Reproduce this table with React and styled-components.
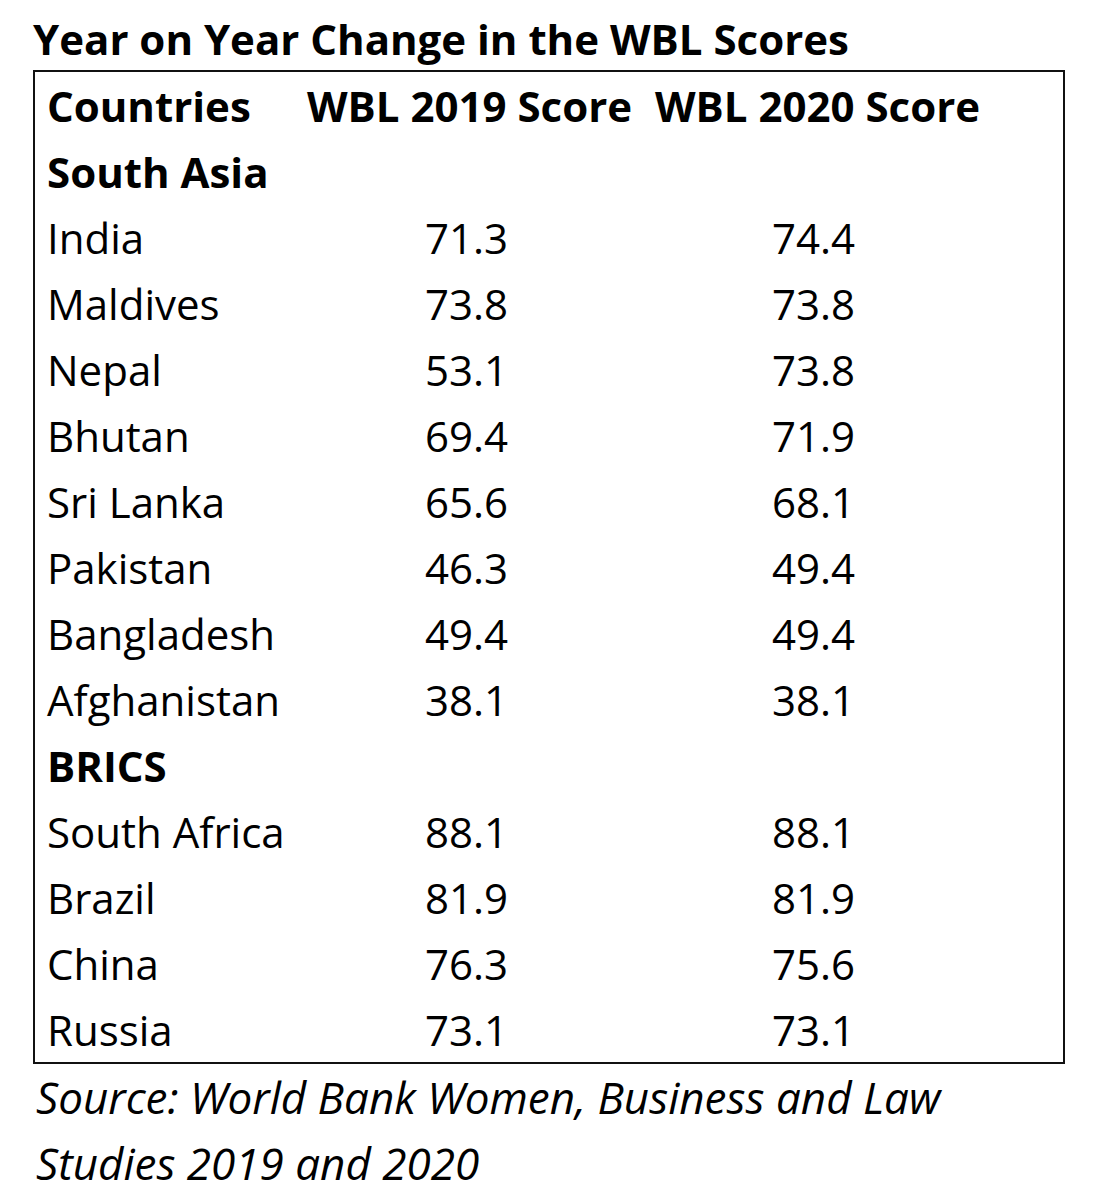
import React from 'react'
import styled, { createGlobalStyle } from 'styled-components'

const GlobalStyle = createGlobalStyle`
    body {
        margin: 0;
        background: #ffffff;
        font-family: "Open Sans", "Liberation Sans", sans-serif;
        color: #000;
    }
`
const Page = styled.div`
    width: 1093px;
    height: 1200px;
    padding: 8px 0 0 33px;
    box-sizing: border-box;
`
const Title = styled.h1`
    margin: 0;
    font-size: 42px;
    font-weight: 700;
    line-height: 62px;
`
const Table = styled.div`
    width: 1032px;
    border: 2px solid #111;
    box-sizing: border-box;
    padding-left: 12px;
`
const Row = styled.div`
    display: grid;
    grid-template-columns: ${p => p.$head ? '260px 348px auto' : '378px 347px auto'};
    height: 66px;
    align-items: center;
    font-size: 42px;
    font-weight: ${p => p.$bold ? 700 : 400};
`
const Source = styled.p`
    margin: 0;
    padding-left: 3px;
    font-size: 44px;
    font-style: italic;
    line-height: 66px;
`

const southAsia = [
  ['India', '71.3', '74.4'],
  ['Maldives', '73.8', '73.8'],
  ['Nepal', '53.1', '73.8'],
  ['Bhutan', '69.4', '71.9'],
  ['Sri Lanka', '65.6', '68.1'],
  ['Pakistan', '46.3', '49.4'],
  ['Bangladesh', '49.4', '49.4'],
  ['Afghanistan', '38.1', '38.1'],
]
const brics = [
  ['South Africa', '88.1', '88.1'],
  ['Brazil', '81.9', '81.9'],
  ['China', '76.3', '75.6'],
  ['Russia', '73.1', '73.1'],
]

const DataRow = ({ item }) => (
  <Row>
    <span>{item[0]}</span>
    <span>{item[1]}</span>
    <span>{item[2]}</span>
  </Row>
)

const App = () => {
  return (
    <Page>
      <GlobalStyle />
      <Title>Year on Year Change in the WBL Scores</Title>
      <Table>
        <Row $head $bold>
          <span>Countries</span>
          <span>WBL 2019 Score</span>
          <span>WBL 2020 Score</span>
        </Row>
        <Row $bold><span>South Asia</span></Row>
        {southAsia.map(item => <DataRow key={item[0]} item={item} />)}
        <Row $bold><span>BRICS</span></Row>
        {brics.map(item => <DataRow key={item[0]} item={item} />)}
      </Table>
      <Source>
        Source: World Bank Women, Business and Law<br />
        Studies 2019 and 2020
      </Source>
    </Page>
  )
}

export default App
